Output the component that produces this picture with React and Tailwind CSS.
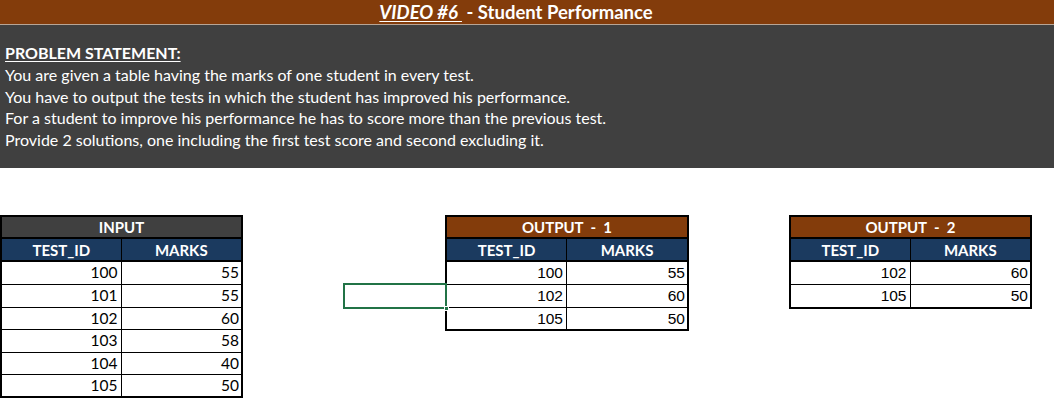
import React from 'react';

const calibri = { fontFamily: 'Lato, "Open Sans", sans-serif' };

const inputRows = [
  [100, 55],
  [101, 55],
  [102, 60],
  [103, 58],
  [104, 40],
  [105, 50],
];
const output1 = [
  [100, 55],
  [102, 60],
  [105, 50],
];
const output2 = [
  [102, 60],
  [105, 50],
];

// Tabla estilo Excel con título, cabecera y filas
const SheetTable = ({ title, titleBg, rows, width, numFont }) => (
  <div className={`border-2 border-black ${width}`}>
    <div
      className={`h-[22px] ${titleBg} border-b-2 border-black flex items-center justify-center text-white font-bold text-[15px] whitespace-pre font-['Lato',sans-serif]`}
    >
      {title}
    </div>
    <div className="h-[23px] bg-[#1b3a5f] border-b-2 border-black grid grid-cols-2 text-white font-bold text-[15px] font-['Lato',sans-serif]">
      <div className="flex items-center justify-center border-r border-black">TEST_ID</div>
      <div className="flex items-center justify-center">MARKS</div>
    </div>
    {rows.map(([id, mark], i) => (
      <div
        key={id}
        className={`h-[22.4px] grid grid-cols-2 text-black leading-none ${numFont} ${i > 0 ? 'border-t border-black' : ''}`}
      >
        <div className="flex items-center justify-end pr-[3px] border-r border-black">{id}</div>
        <div className="flex items-center justify-end pr-[2px]">{mark}</div>
      </div>
    ))}
  </div>
);

export default function App() {
  return (
    <div className="w-[1054px] h-[413px] bg-white overflow-hidden" style={calibri}>
      {/* TÍTULO */}
      <div className="h-[24px] bg-[#833c0b] flex items-center justify-center pr-[22px] pt-[2px] text-white font-bold text-[18.5px]">
        <span className="italic underline decoration-1 underline-offset-2">VIDEO #6&nbsp;</span>
        <span>&nbsp;- Student Performance</span>
      </div>
      <div className="h-px bg-[#b8a596]" />

      {/* ENUNCIADO */}
      <div className="h-[143px] bg-[#404040] text-white text-[16px] pl-[5px] pt-[17px] leading-[21.8px]">
        <div className="font-bold underline underline-offset-2">PROBLEM STATEMENT:</div>
        <div>You are given a table having the marks of one student in every test.</div>
        <div>You have to output the tests in which the student has improved his performance.</div>
        <div>For a student to improve his performance he has to score more than the previous test.</div>
        <div>Provide 2 solutions, one including the first test score and second excluding it.</div>
      </div>

      {/* TABLAS */}
      <div className="flex items-start mt-[47px]">
        <SheetTable
          title="INPUT"
          titleBg="bg-[#404040]"
          rows={inputRows}
          width="w-[243px]"
          numFont="font-['Lato',sans-serif] text-[15.5px]"
        />
        <div className="w-[202px] pl-[100px] pt-[68px]">
          <div className="relative w-[104px] h-[26px] border-2 border-[#217346]">
            <div className="absolute -right-[4px] -bottom-[4px] w-[5px] h-[5px] bg-[#217346] border border-white" />
          </div>
        </div>
        <SheetTable
          title="OUTPUT  -  1"
          titleBg="bg-[#833c0b]"
          rows={output1}
          width="w-[244px]"
          numFont="font-['Liberation_Sans',Arial,sans-serif] text-[15.5px]"
        />
        <div className="w-[100px]" />
        <SheetTable
          title="OUTPUT  -  2"
          titleBg="bg-[#833c0b]"
          rows={output2}
          width="w-[243px]"
          numFont="font-['Liberation_Sans',Arial,sans-serif] text-[15.5px]"
        />
      </div>
    </div>
  );
}
